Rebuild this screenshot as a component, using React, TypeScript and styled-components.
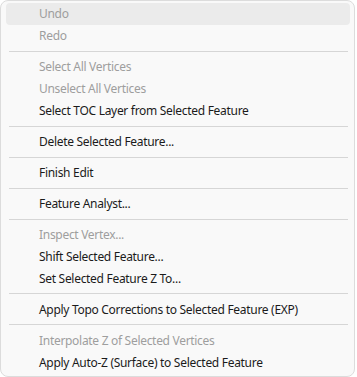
import styled, { createGlobalStyle } from "styled-components";

const GlobalStyle = createGlobalStyle`
    html, body {
        margin: 0;
        padding: 0;
        background: #ffffff;
    }
`;

const Menu = styled.div`
    box-sizing: border-box;
    width: 355px;
    height: 377px;
    padding: 2px 4px 3px 5px;
    background: #f9f9f9;
    border: 1px solid #dcdcdc;
    border-radius: 8px;
    font-family: "Segoe UI", "Noto Sans", sans-serif;
    font-size: 12px;
    letter-spacing: -0.3px;
    display: flex;
    flex-direction: column;
`;

const Item = styled.div<{ $disabled?: boolean; $hover?: boolean }>`
    height: 22px;
    display: flex;
    align-items: center;
    padding-left: 33px;
    border-radius: 4px;
    color: ${(p) => (p.$disabled ? "#9e9e9e" : "#1b1b1b")};
    background: ${(p) => (p.$hover ? "#ebebeb" : "transparent")};
    white-space: nowrap;
`;

const Separator = styled.div`
    height: 1px;
    margin: 4px 2px 4px 3px;
    background: #d6d6d6;
`;

type Entry = { label: string; disabled?: boolean; hover?: boolean } | "sep";

const entries: Entry[] = [
    { label: "Undo", disabled: true, hover: true },
    { label: "Redo", disabled: true },
    "sep",
    { label: "Select All Vertices", disabled: true },
    { label: "Unselect All Vertices", disabled: true },
    { label: "Select TOC Layer from Selected Feature" },
    "sep",
    { label: "Delete Selected Feature..." },
    "sep",
    { label: "Finish Edit" },
    "sep",
    { label: "Feature Analyst..." },
    "sep",
    { label: "Inspect Vertex...", disabled: true },
    { label: "Shift Selected Feature..." },
    { label: "Set Selected Feature Z To..." },
    "sep",
    { label: "Apply Topo Corrections to Selected Feature (EXP)" },
    "sep",
    { label: "Interpolate Z of Selected Vertices", disabled: true },
    { label: "Apply Auto-Z (Surface) to Selected Feature" },
];

export default function App() {
    return (
        <>
            <GlobalStyle />
            <Menu>
                {entries.map((e, i) =>
                    e === "sep" ? (
                        <Separator key={i} />
                    ) : (
                        <Item key={i} $disabled={e.disabled} $hover={e.hover}>
                            {e.label}
                        </Item>
                    )
                )}
            </Menu>
        </>
    );
}
